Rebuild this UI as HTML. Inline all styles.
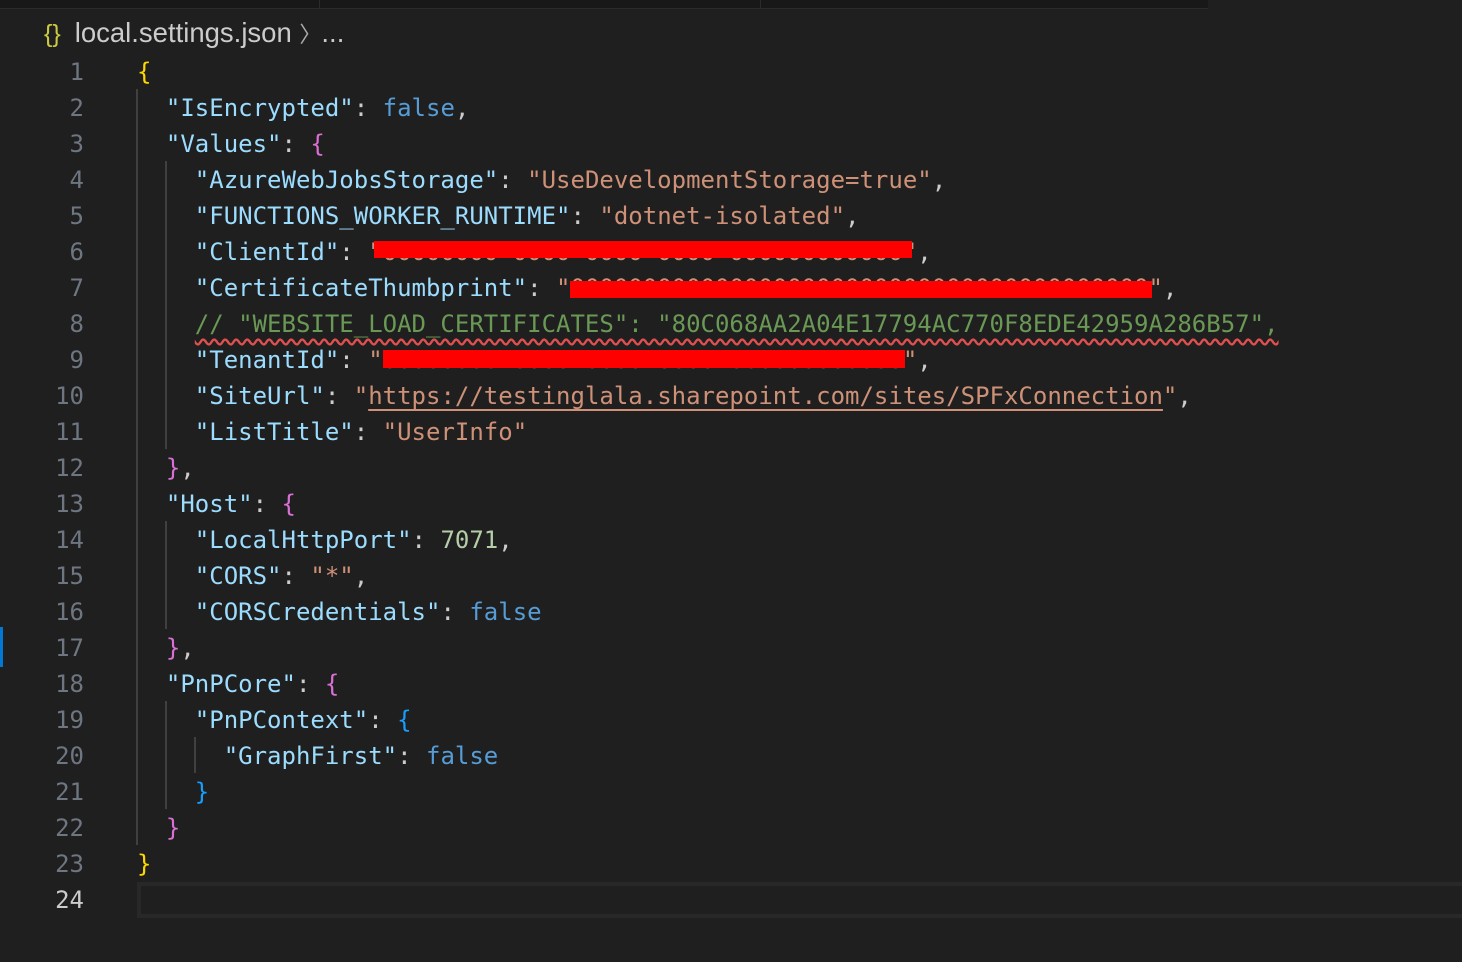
<!DOCTYPE html>
<html><head><meta charset="utf-8"><style>
body{margin:0;width:1462px;height:962px;background:#1f1f1f;overflow:hidden;position:relative;font-family:"DejaVu Sans Mono","Liberation Mono",monospace;}
.tabs{position:absolute;left:0;top:0;width:1208px;height:8px;background:#181818;border-bottom:1px solid #2b2b2b}
.tabs i{position:absolute;top:0;width:1px;height:8px;background:#2b2b2b}
.bc{position:absolute;left:44px;top:15px;font-family:"Liberation Sans",sans-serif;font-size:27.5px;color:#cccccc;line-height:36px}
.bc b{color:#cbcb41;font-weight:normal;margin-right:14px;font-size:25px}
.bc .ch{color:#aaa;font-size:22px}
.ln{position:absolute;left:0;width:84px;text-align:right;font-size:24px;color:#6e7681;line-height:36px}
.cd{position:absolute;left:137px;font-size:24px;line-height:36px;white-space:pre;color:#cccccc}
.k{color:#9cdcfe}.s{color:#ce9178}.f{color:#569cd6}.n{color:#b5cea8}.c{color:#6a9955;text-decoration:underline wavy #e05050;text-underline-offset:6px}
.y{color:#ffd700}.p{color:#da70d6}.b{color:#179fff}
.u{text-decoration:underline;text-underline-offset:5px}
.g{position:absolute;width:2px;background:#404040}
.red{position:absolute;background:#ff0000}
</style></head><body>
<div class="tabs"><i style="left:319px"></i><i style="left:760px"></i></div>
<div class="bc"><b>{}</b>local.settings.json <span class="ch">〉</span>...</div>
<div style="position:absolute;left:0;top:627px;width:3px;height:40px;background:#0078d4"></div>
<div style="position:absolute;left:137px;top:882px;right:0;height:28px;border:4px solid #282828;border-right:none"></div>
<div class="g" style="left:136px;top:89px;height:756px"></div>
<div class="g" style="left:165px;top:161px;height:288px"></div>
<div class="g" style="left:165px;top:521px;height:108px"></div>
<div class="g" style="left:165px;top:701px;height:108px"></div>
<div class="g" style="left:194px;top:737px;height:36px"></div>
<div class="cd" style="top:54px"><span class="y">{</span>
  <span class="k">"IsEncrypted"</span>: <span class="f">false</span>,
  <span class="k">"Values"</span>: <span class="p">{</span>
    <span class="k">"AzureWebJobsStorage"</span>: <span class="s">"UseDevelopmentStorage=true"</span>,
    <span class="k">"FUNCTIONS_WORKER_RUNTIME"</span>: <span class="s">"dotnet-isolated"</span>,
    <span class="k">"ClientId"</span>: <span class="s">"00000000-0000-0000-0000-000000000000"</span>,
    <span class="k">"CertificateThumbprint"</span>: <span class="s">"0000000000000000000000000000000000000000"</span>,
    <span class="c">// "WEBSITE_LOAD_CERTIFICATES": "80C068AA2A04E17794AC770F8EDE42959A286B57",</span>
    <span class="k">"TenantId"</span>: <span class="s">"00000000-0000-0000-0000-000000000000"</span>,
    <span class="k">"SiteUrl"</span>: <span class="s">"<span class="u">https://testinglala.sharepoint.com/sites/SPFxConnection</span>"</span>,
    <span class="k">"ListTitle"</span>: <span class="s">"UserInfo"</span>
  <span class="p">}</span>,
  <span class="k">"Host"</span>: <span class="p">{</span>
    <span class="k">"LocalHttpPort"</span>: <span class="n">7071</span>,
    <span class="k">"CORS"</span>: <span class="s">"*"</span>,
    <span class="k">"CORSCredentials"</span>: <span class="f">false</span>
  <span class="p">}</span>,
  <span class="k">"PnPCore"</span>: <span class="p">{</span>
    <span class="k">"PnPContext"</span>: <span class="b">{</span>
      <span class="k">"GraphFirst"</span>: <span class="f">false</span>
    <span class="b">}</span>
  <span class="p">}</span>
<span class="y">}</span>
</div>
<div class="red" style="left:374px;top:241px;width:538px;height:17px"></div>
<div class="red" style="left:570px;top:281px;width:582px;height:17px"></div>
<div class="red" style="left:383px;top:350px;width:522px;height:18px"></div>
<div class="ln" style="top:54px">1<br>2<br>3<br>4<br>5<br>6<br>7<br>8<br>9<br>10<br>11<br>12<br>13<br>14<br>15<br>16<br>17<br>18<br>19<br>20<br>21<br>22<br>23<br><span style="color:#cccccc">24</span></div>
</body></html>
